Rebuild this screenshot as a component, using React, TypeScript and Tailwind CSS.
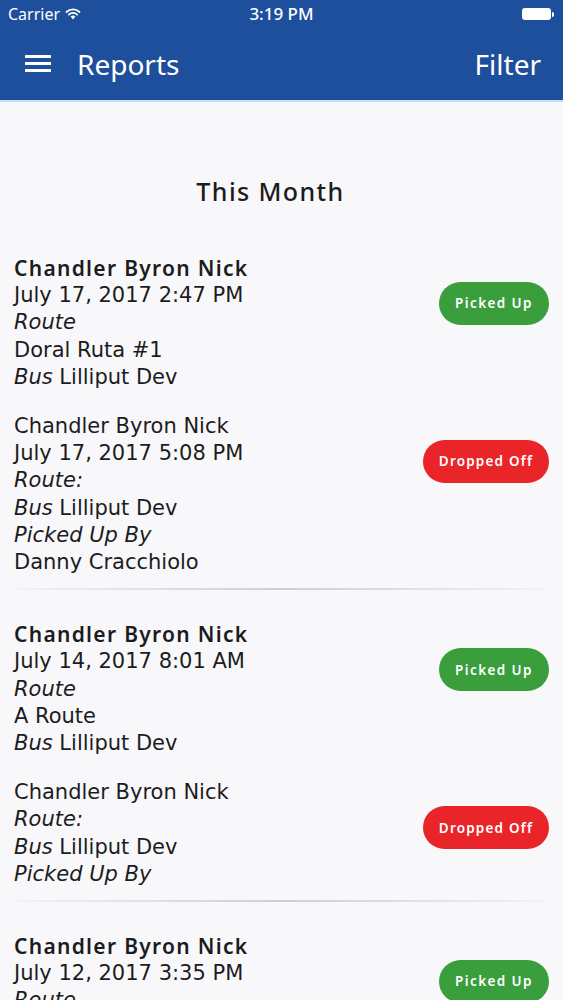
type Entry = {
  lines: { label?: string; text?: string }[];
  bold?: boolean;
  status: "pickup" | "dropoff";
};

const groups: Entry[][] = [
  [
    {
      bold: true,
      status: "pickup",
      lines: [
        { text: "Chandler Byron Nick" },
        { text: "July 17, 2017 2:47 PM" },
        { label: "Route" },
        { text: "Doral Ruta #1" },
        { label: "Bus", text: "Lilliput Dev" },
      ],
    },
    {
      status: "dropoff",
      lines: [
        { text: "Chandler Byron Nick" },
        { text: "July 17, 2017 5:08 PM" },
        { label: "Route:" },
        { label: "Bus", text: "Lilliput Dev" },
        { label: "Picked Up By" },
        { text: "Danny Cracchiolo" },
      ],
    },
  ],
  [
    {
      bold: true,
      status: "pickup",
      lines: [
        { text: "Chandler Byron Nick" },
        { text: "July 14, 2017 8:01 AM" },
        { label: "Route" },
        { text: "A Route" },
        { label: "Bus", text: "Lilliput Dev" },
      ],
    },
    {
      status: "dropoff",
      lines: [
        { text: "Chandler Byron Nick" },
        { label: "Route:" },
        { label: "Bus", text: "Lilliput Dev" },
        { label: "Picked Up By" },
      ],
    },
  ],
  [
    {
      bold: true,
      status: "pickup",
      lines: [
        { text: "Chandler Byron Nick" },
        { text: "July 12, 2017 3:35 PM" },
        { label: "Route" },
        { text: "A Route" },
        { label: "Bus", text: "Lilliput Dev" },
      ],
    },
  ],
];

const StatusPill = ({ status }: { status: Entry["status"] }) =>
  status === "pickup" ? (
    <div className="mt-[27px] flex h-[43px] w-[110px] shrink-0 items-center justify-center rounded-full bg-[#3a9e3d] text-[13.5px] font-semibold tracking-[1.4px] text-white">
      Picked Up
    </div>
  ) : (
    <div className="mt-[27px] flex h-[43px] w-[126px] shrink-0 items-center justify-center rounded-full bg-[#ea2529] text-[13.5px] font-semibold tracking-[1.2px] text-white">
      Dropped Off
    </div>
  );

const Record = ({ entry }: { entry: Entry }) => (
  <div className="flex items-start justify-between pr-[14px]">
    <div className="text-[21px] leading-[27.2px] text-[#1c1c1e]">
      {entry.lines.map((line, idx) =>
        idx === 0 && entry.bold ? (
          <div
            key={idx}
            className="font-semibold tracking-[1.3px]"
            style={{ fontFamily: "'Noto Sans', sans-serif" }}
          >
            {line.text}
          </div>
        ) : (
          <div
            key={idx}
            style={{ fontFamily: "'DejaVu Sans', 'Noto Sans', sans-serif" }}
          >
            {line.label && <span className="italic">{line.label}</span>}
            {line.label && line.text && " "}
            {line.text}
          </div>
        )
      )}
    </div>
    <StatusPill status={entry.status} />
  </div>
);

export default function App() {
  return (
    <div
      className="min-h-screen w-[563px] overflow-hidden bg-[#f8f8fa]"
      style={{ fontFamily: "'Noto Sans', 'Open Sans', sans-serif" }}
    >
      <div className="border-b-2 border-[#c9dcf3] bg-[#1e4f9c] text-white">
        <div className="relative flex h-[28px] items-center px-[8px] text-[16px]">
          <div className="flex items-center gap-[5px]">
            <span>Carrier</span>
            <svg width="16" height="12" viewBox="0 0 16 12" fill="white">
              <path d="M8 11.5 10.4 8.6a3.4 3.4 0 0 0-4.8 0Z" />
              <path
                d="M3.9 6.6a5.8 5.8 0 0 1 8.2 0M1.5 4a9.3 9.3 0 0 1 13 0"
                stroke="white"
                strokeWidth="1.8"
                fill="none"
                strokeLinecap="round"
              />
            </svg>
          </div>
          <div className="absolute left-1/2 -translate-x-1/2 text-[17px] font-medium">
            3:19 PM
          </div>
          <div className="ml-auto mr-[1px] flex items-center">
            <div className="h-[12px] w-[29px] rounded-[3px] bg-white" />
            <div className="ml-[1px] h-[5px] w-[2px] rounded-r bg-white" />
          </div>
        </div>
        <div className="flex h-[72px] items-center justify-between pl-[25px] pr-[22px]">
          <div className="flex items-center gap-[26px]">
            <svg width="26" height="18" viewBox="0 0 26 18" fill="white">
              <rect x="0" y="0" width="26" height="3" rx="0.5" />
              <rect x="0" y="7" width="26" height="3" rx="0.5" />
              <rect x="0" y="14" width="26" height="3" rx="0.5" />
            </svg>
            <span className="text-[28px]">Reports</span>
          </div>
          <span className="text-[28px]">Filter</span>
        </div>
      </div>

      <div className="pr-[22px] pt-[75px] text-center text-[25px] font-medium leading-[28px] tracking-[1.4px] text-[#1c1c1e]">
        This Month
      </div>

      <div className="mt-[50px] pl-[14px]">
        {groups.map((group, gi) => (
          <div key={gi}>
            <div className="flex flex-col gap-[22px] pb-[12px]">
              {group.map((entry, ei) => (
                <Record key={ei} entry={entry} />
              ))}
            </div>
            {gi < groups.length - 1 && (
              <div className="mb-[31px] ml-[4px] mr-[18px] h-[2px] bg-gradient-to-r from-[#f2f2f4] via-[#cfcfd1] to-[#f2f2f4]" />
            )}
          </div>
        ))}
      </div>
    </div>
  );
}
